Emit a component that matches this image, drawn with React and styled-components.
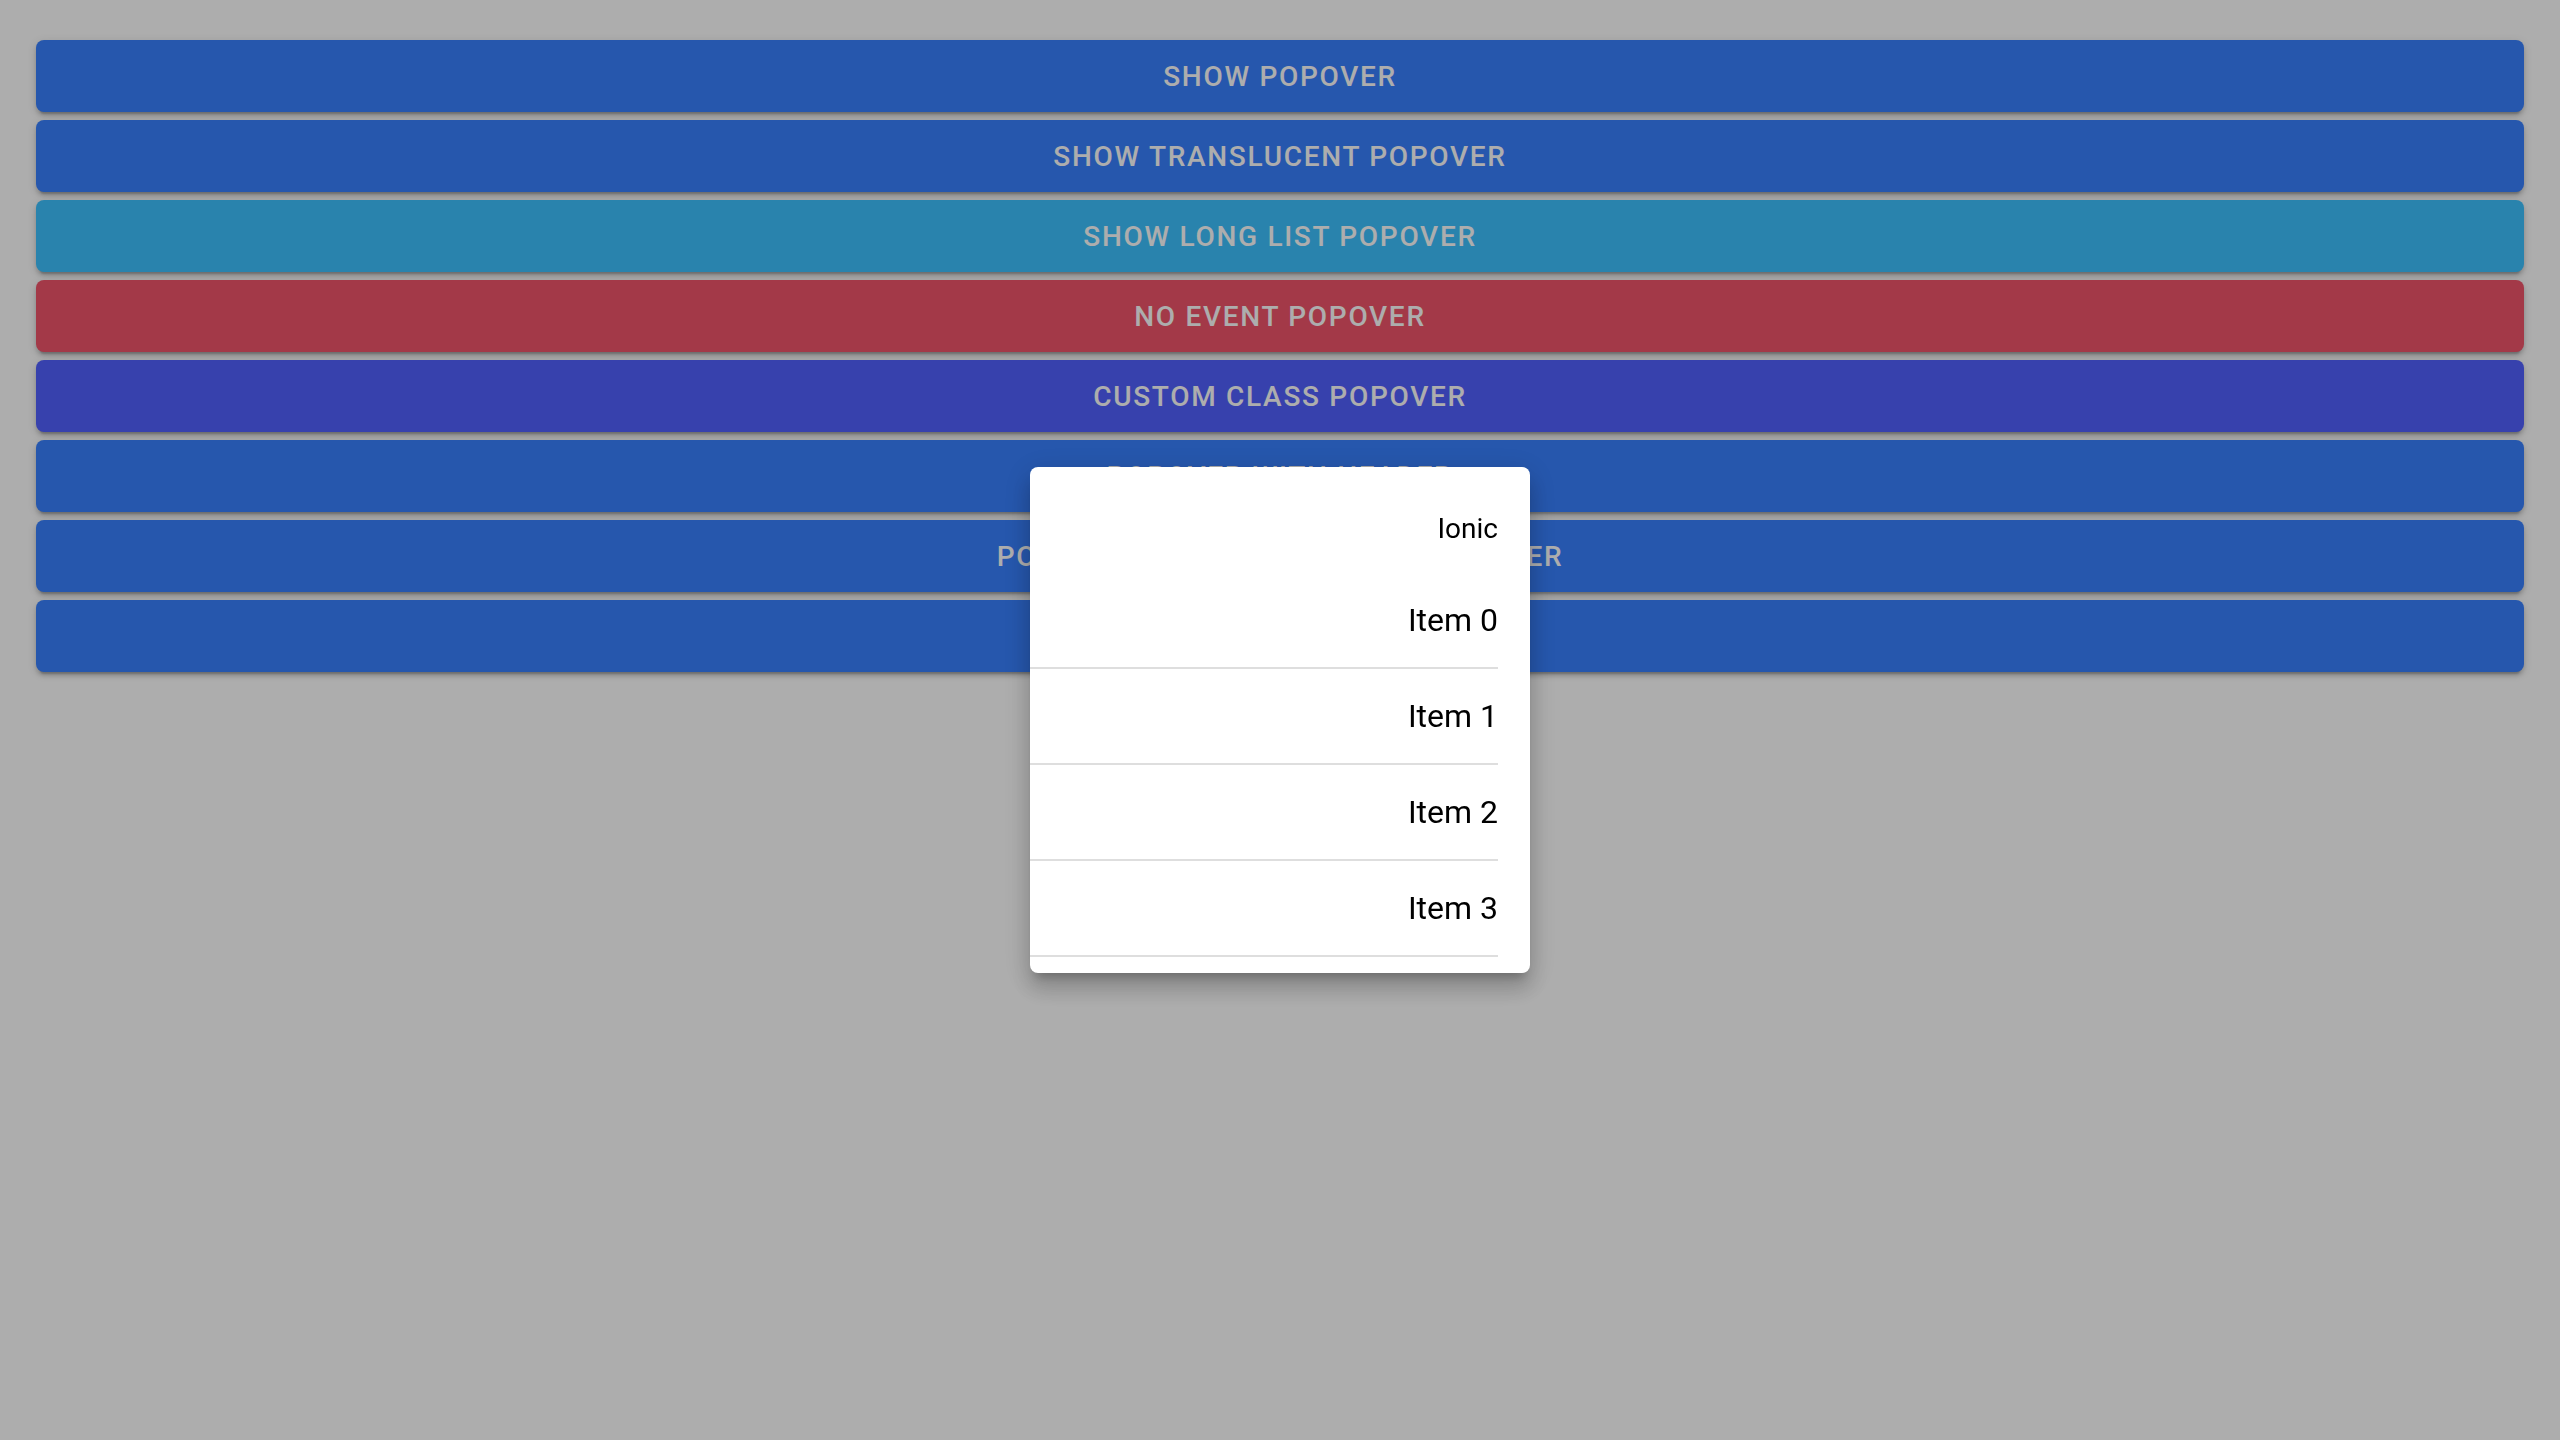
import React from "react";
import styled, { createGlobalStyle } from "styled-components";

const GlobalStyle = createGlobalStyle`
  html, body {
    margin: 0;
    padding: 0;
    background: #ffffff;
    font-family: Roboto, "Noto Sans", "Liberation Sans", sans-serif;
  }
`;

const colors = {
  primary: "#3880ff",
  secondary: "#3dc2ff",
  tertiary: "#5260ff",
  danger: "#f0546a",
};

const buttons = [
  { label: "Show Popover", color: "primary" },
  { label: "Show Translucent Popover", color: "primary" },
  { label: "Show Long List Popover", color: "secondary" },
  { label: "No Event Popover", color: "danger" },
  { label: "Custom Class Popover", color: "tertiary" },
  { label: "Popover With Header", color: "primary" },
  { label: "Popover With Translucent Header", color: "primary" },
  { label: "Show RTL Popover", color: "primary" },
];

const Page = styled.main`
  min-height: 1440px;
  padding: 40px 36px;
  box-sizing: border-box;
`;

const ButtonStack = styled.div`
  display: flex;
  flex-direction: column;
  gap: 8px;
`;

const Button = styled.button`
  height: 72px;
  border: 0;
  border-radius: 8px;
  background: ${(p) => colors[p.$color]};
  color: #ffffff;
  font-family: Roboto, "Liberation Sans", sans-serif;
  font-size: 28px;
  font-weight: 500;
  letter-spacing: 1.7px;
  text-transform: uppercase;
  box-shadow: 0 6px 2px -4px rgba(0, 0, 0, 0.2), 0 4px 4px 0 rgba(0, 0, 0, 0.14),
    0 2px 10px 0 rgba(0, 0, 0, 0.12);
  cursor: pointer;
`;

const Backdrop = styled.div`
  position: fixed;
  inset: 0;
  background: rgba(0, 0, 0, 0.32);
`;

const Popover = styled.div`
  position: fixed;
  top: 467px;
  left: 1030px;
  width: 500px;
  background: #ffffff;
  border-radius: 8px;
  direction: rtl;
  box-shadow: 0 10px 10px -6px rgba(0, 0, 0, 0.2), 0 16px 20px 2px rgba(0, 0, 0, 0.14),
    0 6px 28px 4px rgba(0, 0, 0, 0.12);
  overflow: hidden;
`;

const List = styled.div`
  padding: 16px 0;
`;

const ListHeader = styled.div`
  min-height: 90px;
  display: flex;
  align-items: center;
  padding-inline-start: 32px;
  font-size: 28px;
  color: #000000;
`;

const Item = styled.div`
  padding-inline-start: 32px;
`;

const ItemInner = styled.div`
  height: 96px;
  display: flex;
  align-items: center;
  border-bottom: 2px solid #dedede;
  box-sizing: border-box;
  font-size: 32px;
  color: #000000;
`;

export default function App() {
  return (
    <>
      <GlobalStyle />
      <Page>
        <ButtonStack>
          {buttons.map((b) => (
            <Button key={b.label} $color={b.color}>
              {b.label}
            </Button>
          ))}
        </ButtonStack>
      </Page>
      <Backdrop />
      <Popover>
        <List>
          <ListHeader>Ionic</ListHeader>
          {[0, 1, 2, 3].map((i) => (
            <Item key={i}>
              <ItemInner>Item {i}</ItemInner>
            </Item>
          ))}
        </List>
      </Popover>
    </>
  );
}
